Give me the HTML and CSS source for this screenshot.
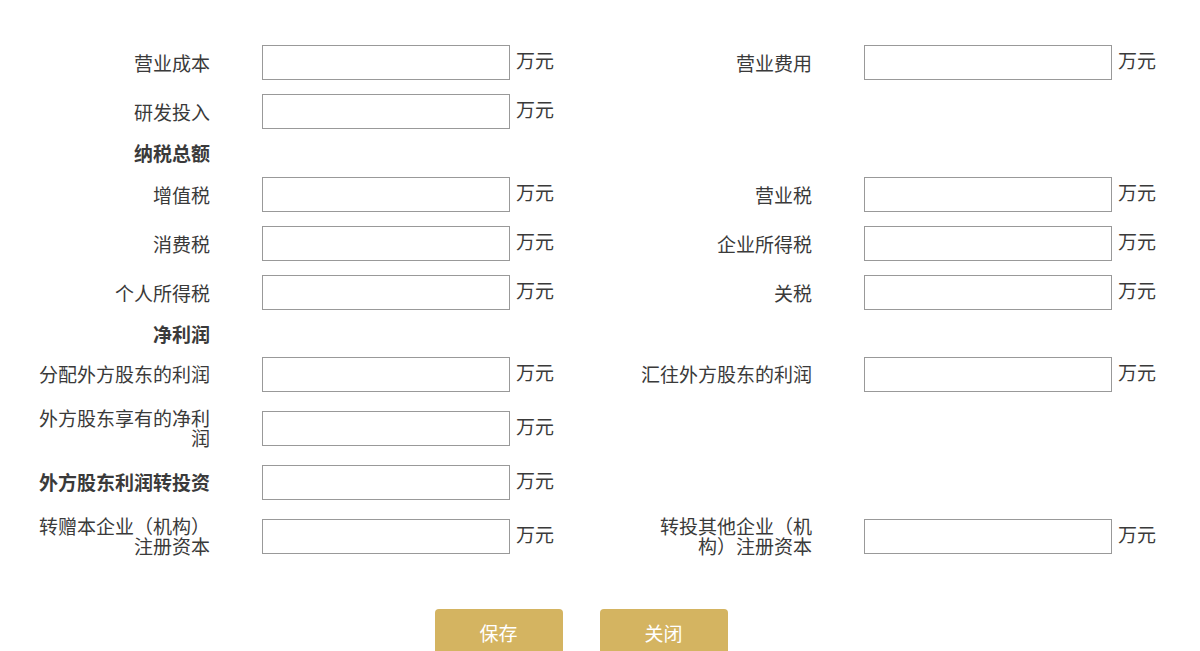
FILE: index.html
```html
<!DOCTYPE html>
<html lang="zh-CN">
<head>
    <meta charset="UTF-8">
    <meta name="viewport" content="width=device-width, initial-scale=1.0">
    <title>经营情况</title>
    <link rel="stylesheet" href="styles.css">
</head>
<body>
    <div class="container">
        <div class="rows">
            <div class="row">
                <div class="field">
                    <label>营业成本</label>
                    <input type="text">
                    <span class="unit">万元</span>
                </div>
                <div class="field">
                    <label>营业费用</label>
                    <input type="text">
                    <span class="unit">万元</span>
                </div>
            </div>
            <div class="row">
                <div class="field">
                    <label>研发投入</label>
                    <input type="text">
                    <span class="unit">万元</span>
                </div>
            </div>
            <div class="row heading">
                <div class="field">
                    <label>纳税总额</label>
                </div>
            </div>
            <div class="row">
                <div class="field">
                    <label>增值税</label>
                    <input type="text">
                    <span class="unit">万元</span>
                </div>
                <div class="field">
                    <label>营业税</label>
                    <input type="text">
                    <span class="unit">万元</span>
                </div>
            </div>
            <div class="row">
                <div class="field">
                    <label>消费税</label>
                    <input type="text">
                    <span class="unit">万元</span>
                </div>
                <div class="field">
                    <label>企业所得税</label>
                    <input type="text">
                    <span class="unit">万元</span>
                </div>
            </div>
            <div class="row">
                <div class="field">
                    <label>个人所得税</label>
                    <input type="text">
                    <span class="unit">万元</span>
                </div>
                <div class="field">
                    <label>关税</label>
                    <input type="text">
                    <span class="unit">万元</span>
                </div>
            </div>
            <div class="row heading">
                <div class="field">
                    <label>净利润</label>
                </div>
            </div>
            <div class="row tall">
                <div class="field">
                    <label>分配外方股东的利润</label>
                    <input type="text">
                    <span class="unit">万元</span>
                </div>
                <div class="field">
                    <label>汇往外方股东的利润</label>
                    <input type="text">
                    <span class="unit">万元</span>
                </div>
            </div>
            <div class="row tall">
                <div class="field">
                    <label>外方股东享有的净利润</label>
                    <input type="text">
                    <span class="unit">万元</span>
                </div>
            </div>
            <div class="row tall">
                <div class="field">
                    <label class="strong">外方股东利润转投资</label>
                    <input type="text">
                    <span class="unit">万元</span>
                </div>
            </div>
            <div class="row tall">
                <div class="field">
                    <label>转赠本企业（机构）注册资本</label>
                    <input type="text">
                    <span class="unit">万元</span>
                </div>
                <div class="field">
                    <label>转投其他企业（机构）注册资本</label>
                    <input type="text">
                    <span class="unit">万元</span>
                </div>
            </div>
        </div>

        <div class="button-group">
            <button>保存</button>
            <button>关闭</button>
        </div>
    </div>
</body>
</html>
```

FILE: styles.css
```css
* {
    margin: 0;
    padding: 0;
    box-sizing: border-box;
}

body {
    font-family: "Noto Sans CJK SC", "Microsoft YaHei", sans-serif;
    color: #3a3a3a;
    background: #fff;
}

.container {
    padding: 45px 0 0 30px;
}

.rows {
    display: flex;
    flex-direction: column;
    gap: 14px;
}

.row {
    display: grid;
    grid-template-columns: 602px 602px;
}

/* 下半部分行距稍大 */
.row.tall {
    min-height: 40px;
    margin-top: -4px;
    margin-bottom: 4px;
}

.field {
    display: flex;
    align-items: center;
}

label {
    width: 180px;
    font-size: 19px;
    line-height: 20px;
    text-align: right;
}

.heading label,
label.strong {
    font-weight: bold;
}

input {
    width: 248px;
    height: 35px;
    margin-left: 52px;
    border: 1px solid #999;
    font-size: 16px;
    padding: 0 6px;
}

.unit {
    margin-left: 6px;
    margin-bottom: 5px;
    font-size: 19px;
    line-height: 20px;
}

.button-group {
    display: flex;
    justify-content: center;
    gap: 37px;
    margin-top: 49px;
    padding-right: 68px;
}

button {
    width: 128px;
    height: 46px;
    border: none;
    border-radius: 4px;
    background: #d4b461;
    color: #fff;
    font-family: inherit;
    font-size: 19px;
    cursor: pointer;
}
```
